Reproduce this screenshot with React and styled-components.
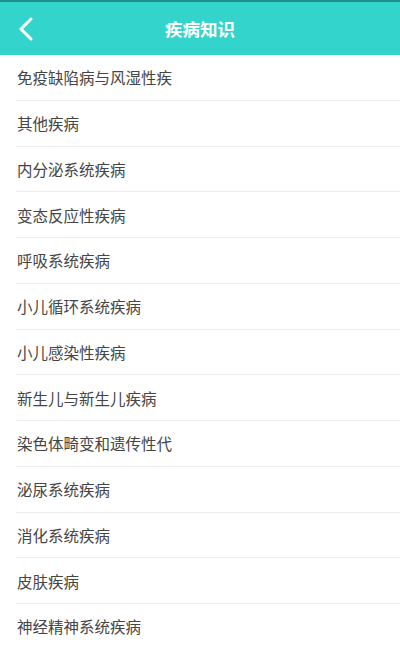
import React from "react";
import styled, { createGlobalStyle } from "styled-components";

const Global = createGlobalStyle`
  html, body { margin: 0; padding: 0; background: #fff; }
  body { font-family: "Noto Sans CJK SC", "Noto Sans", sans-serif; }
`;

const Page = styled.div`
  width: 400px;
  min-height: 647px;
  background: #fff;
  overflow: hidden;
`;

const Header = styled.header`
  height: 55px;
  box-sizing: border-box;
  border-top: 2px solid #1f8f8a;
  background: #33d4cc;
  display: flex;
  align-items: center;
  justify-content: center;
  position: relative;
`;

const Back = styled.button`
  position: absolute;
  left: 12px;
  top: 50%;
  transform: translateY(-50%);
  width: 28px;
  height: 32px;
  padding: 0;
  border: 0;
  background: transparent;
  display: flex;
  align-items: center;
  justify-content: center;
`;

const Title = styled.h1`
  margin: 0;
  color: #fff;
  font-size: 17.5px;
  font-weight: 700;
`;

const List = styled.ul`
  list-style: none;
  margin: 0;
  padding: 0;
`;

const Item = styled.li`
  height: 45.75px;
  box-sizing: border-box;
  margin-left: 16px;
  padding-left: 1px;
  display: flex;
  align-items: center;
  border-bottom: 1.5px solid #ececec;
  color: #454545;
  font-size: 15.5px;
`;

const items = [
  "免疫缺陷病与风湿性疾",
  "其他疾病",
  "内分泌系统疾病",
  "变态反应性疾病",
  "呼吸系统疾病",
  "小儿循环系统疾病",
  "小儿感染性疾病",
  "新生儿与新生儿疾病",
  "染色体畸变和遗传性代",
  "泌尿系统疾病",
  "消化系统疾病",
  "皮肤疾病",
  "神经精神系统疾病",
];

export default function App() {
  return (
    <Page>
      <Global />
      <Header>
        <Back aria-label="back">
          <svg width="16" height="24" viewBox="0 0 16 24">
            <path d="M13 2 L3 12 L13 22" fill="none" stroke="#fff" strokeWidth="3" strokeLinecap="round" strokeLinejoin="round" />
          </svg>
        </Back>
        <Title>疾病知识</Title>
      </Header>
      <List>
        {items.map((t) => (
          <Item key={t}>{t}</Item>
        ))}
      </List>
    </Page>
  );
}
